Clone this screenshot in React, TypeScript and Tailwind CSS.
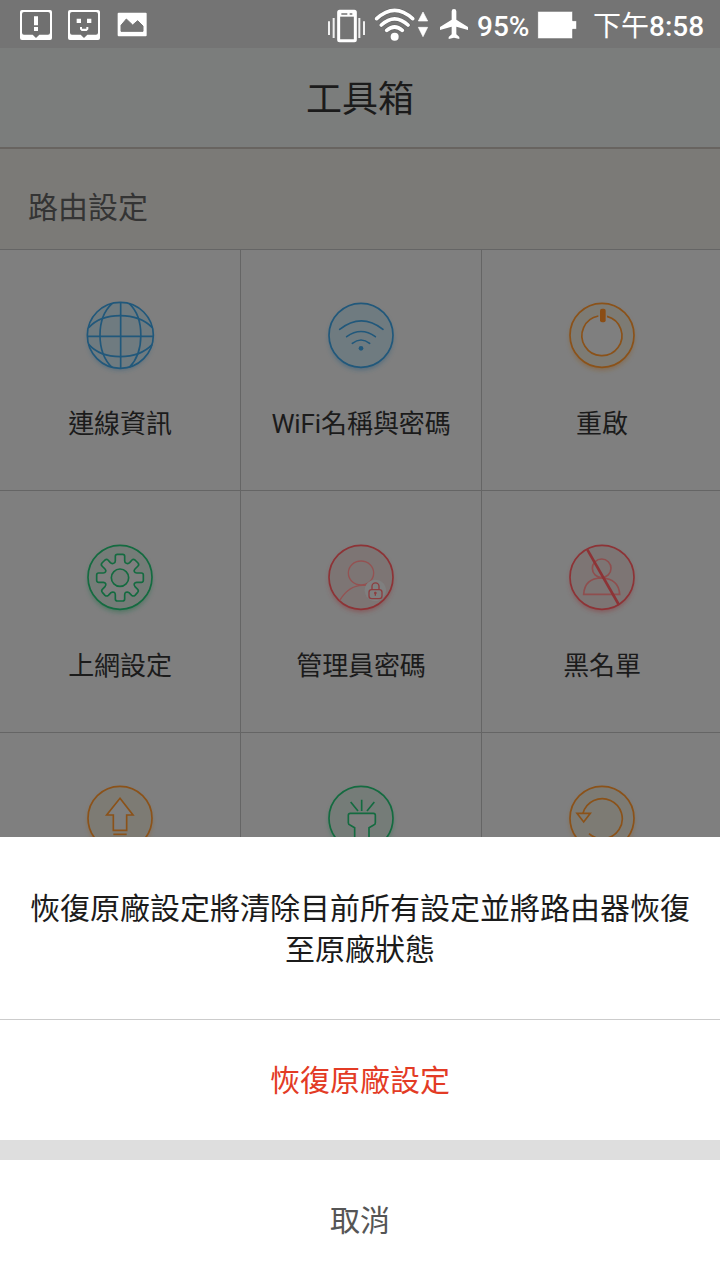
import type { ReactNode } from "react";

type Tone = "blue" | "orange" | "green" | "red";

const tones: Record<Tone, { stroke: string; fill: string }> = {
  blue: { stroke: "#21587b", fill: "#6f7b80" },
  orange: { stroke: "#8b5219", fill: "#7d7b74" },
  green: { stroke: "#146b40", fill: "#757c78" },
  red: { stroke: "#8d3336", fill: "#7d7574" },
};

function ToolIcon({ tone, children }: { tone: Tone; children: ReactNode }) {
  const { stroke, fill } = tones[tone];
  return (
    <svg width="100" height="100" viewBox="0 0 300 300" fill="none" stroke={stroke} strokeWidth="5" className="shrink-0">
      <defs>
        <filter id={`glow-${tone}`} x="-20%" y="-20%" width="140%" height="150%">
          <feGaussianBlur stdDeviation="8" />
        </filter>
      </defs>
      <circle cx="150" cy="160" r="95" fill={stroke} stroke="none" opacity="0.5" filter={`url(#glow-${tone})`} />
      <circle cx="150" cy="151" r="96" fill={fill} />
      {children}
    </svg>
  );
}

const GlobeIcon = () => (
  <ToolIcon tone="blue">
    <circle cx="151" cy="151" r="99" fill="#6f7b80" />
    <path d="M152 52v197M52 154h197" />
    <path d="M126 56C78 100 78 200 126 247M178 56C224 100 224 200 178 247" />
    <path d="M56 128C100 80 200 80 247 128M56 178C100 227 200 227 247 178" />
  </ToolIcon>
);

const WifiIcon = () => (
  <ToolIcon tone="blue">
    <path d="M86 133Q151 82 216 133M107 155Q150 124 193 155M124 175Q150 155 176 175" strokeLinecap="round" />
    <circle cx="150" cy="190" r="7" fill="#21587b" stroke="none" />
  </ToolIcon>
);

const PowerIcon = () => (
  <ToolIcon tone="orange">
    <circle cx="150" cy="152" r="60" fill="#7f7f7f" stroke="none" />
    <path d="M139 93A60 60 0 1 0 165 94" />
    <rect x="144" y="71" width="17" height="41" rx="6" fill="#8b4d14" stroke="none" />
  </ToolIcon>
);

const GearIcon = () => (
  <ToolIcon tone="green">
    <path
      fill="#7f7f7f"
      strokeLinejoin="round"
      d="M136 88Q136 82 142 82H158Q164 82 164 88V101Q164 107 169 109Q175 111 179 107L186 99Q190 95 195 99L204 108Q208 113 204 117L195 126Q191 130 193 134Q195 138 200 138H214Q220 138 220 144V160Q220 166 214 166H200Q195 166 193 170Q191 175 195 179L203 187Q207 191 203 196L195 205Q190 209 185 205L177 197Q173 194 168 196Q164 198 164 203V216Q164 222 158 222H142Q136 222 136 216V203Q136 198 132 196Q127 194 123 197L115 205Q110 209 105 205L97 196Q93 191 97 187L105 179Q109 175 107 170Q105 166 100 166H86Q80 166 80 160V144Q80 138 86 138H100Q105 138 107 134Q109 130 105 126L96 117Q92 113 96 108L105 99Q110 95 114 99L121 107Q125 111 131 109Q136 107 136 101Z"
    />
    <circle cx="150" cy="152" r="26" fill="#757c78" />
  </ToolIcon>
);

const AdminIcon = () => (
  <ToolIcon tone="red">
    <g stroke="#945252" strokeWidth="4">
      <ellipse cx="150" cy="138" rx="38" ry="36" />
      <path d="M86 220Q114 175 154 175H170" />
      <circle cx="193" cy="190" r="32" fill="#7f7f7f" stroke="none" />
      <rect x="174" y="188" width="39" height="27" rx="8" stroke="#8d3d3f" />
      <path d="M183 187v-9a10 10 0 0 1 21 0v9M193 194v12M189 198h8" stroke="#8d3d3f" />
    </g>
  </ToolIcon>
);

const BlacklistIcon = () => (
  <ToolIcon tone="red">
    <g stroke="#8f4e4e">
      <circle cx="149" cy="124" r="28" />
      <path d="M95 202Q98 153 149 153Q200 155 203 202Z" />
    </g>
    <path d="M106 68L201 234" strokeWidth="8" />
  </ToolIcon>
);

const UpgradeIcon = () => (
  <ToolIcon tone="orange">
    <path d="M150 91L189 141H170V187H130V141H110Z" fill="#7f7f7f" />
    <path d="M130 199h40" />
  </ToolIcon>
);

const TorchIcon = () => (
  <ToolIcon tone="green">
    <path d="M119 102L141 129M152 95V129M190 102L168 129" />
    <path
      d="M118 136H187Q193 136 193 142V164Q193 169 188 171L174 179V250H131V179L117 171Q112 169 112 164V142Q112 136 118 136Z"
      fill="#7f7f7f"
    />
  </ToolIcon>
);

const ResetIcon = () => (
  <ToolIcon tone="orange">
    <path d="M93 136A60 60 0 1 1 111 197" />
    <path d="M75 136H115L95 162Z" />
  </ToolIcon>
);

// the last row sits behind the sheet, only its icons peek out
const rows = [
  {
    className: "h-[241px] pt-[35px]",
    items: [
      { label: "連線資訊", icon: <GlobeIcon /> },
      { label: "WiFi名稱與密碼", icon: <WifiIcon /> },
      { label: "重啟", icon: <PowerIcon /> },
    ],
  },
  {
    className: "h-[242px] pt-9",
    items: [
      { label: "上網設定", icon: <GearIcon /> },
      { label: "管理員密碼", icon: <AdminIcon /> },
      { label: "黑名單", icon: <BlacklistIcon /> },
    ],
  },
  {
    className: "h-[241px] pt-[35px]",
    items: [
      { label: "", icon: <UpgradeIcon /> },
      { label: "", icon: <TorchIcon /> },
      { label: "", icon: <ResetIcon /> },
    ],
  },
];

function StatusBar() {
  return (
    <div className="flex h-12 shrink-0 items-center bg-[#747474] text-white">
      <svg width="160" height="48" viewBox="0 0 480 144" className="shrink-0">
        <rect x="60" y="30" width="96" height="90" rx="6" fill="#fff" />
        <path d="M72 36H144Q150 36 150 42V98Q150 104 144 104H118L108 114L98 104H72Q66 104 66 98V42Q66 36 72 36Z" fill="#707070" />
        <path d="M102 49H114V76H102ZM102 81H114V93H102Z" fill="#fff" />
        <rect x="204" y="30" width="96" height="90" rx="6" fill="#fff" />
        <path d="M216 36H288Q294 36 294 42V98Q294 104 288 104H262L252 114L242 104H216Q210 104 210 98V42Q210 36 216 36Z" fill="#707070" />
        <path d="M230 56H243V69H230ZM261 56H274V69H261ZM240 81H246V86H259V81H265V88L260 93H245L240 88Z" fill="#fff" />
        <rect x="353" y="38" width="87" height="71" rx="3" fill="#fff" />
        <path d="M363 94V76L379 57L398 75L413 62L429 78V94Z" fill="#747474" strokeLinejoin="round" stroke="#747474" strokeWidth="3" />
      </svg>
      <svg width="163" height="48" viewBox="0 0 489 144" className="ml-[150px] shrink-0">
        <rect x="86" y="34" width="50" height="88" rx="3" stroke="#fff" strokeWidth="9" fill="none" />
        <path d="M86 42H136" stroke="#fff" strokeWidth="16" />
        <path d="M94 42H112M119 42H127" stroke="#747474" strokeWidth="5" />
        <path d="M57 64V105M71 54V114M148 54V114M162 64V105" stroke="#f0f0f0" strokeWidth="6" />
        <g fill="none" strokeLinecap="round">
          <path d="M200 56Q254 6 308 56M214 75Q254 38 294 75M230 91Q254 71 277 91" stroke="#606060" strokeWidth="14" />
          <path d="M200 56Q254 6 308 56M214 75Q254 38 294 75M230 91Q254 71 277 91" stroke="#fff" strokeWidth="11" />
        </g>
        <circle cx="254" cy="110" r="12" fill="#fff" />
        <path d="M339 36L353 63H325ZM339 110L353 82H325Z" fill="#fff" stroke="#fff" strokeWidth="2" strokeLinejoin="round" />
        <path d="M432 27Q439 27 439 34V59L474 81V90L439 80V103L448 111V117L432 113L416 117V111L425 103V80L390 90V81L425 59V34Q425 27 432 27Z" fill="#fff" />
      </svg>
      <span className="ml-1 w-[53px] shrink-0 whitespace-nowrap pt-1.5 font-['Roboto'] text-[28px] leading-none font-medium">95%</span>
      <svg width="42" height="48" viewBox="0 0 126 144" className="ml-1.5 shrink-0">
        <path d="M5 34H110V62H122V88H110V116H5Z" fill="#fff" stroke="#606060" strokeWidth="2" />
      </svg>
      <span className="ml-[15px] whitespace-nowrap pt-1.5 font-['Roboto','Noto_Sans_CJK_TC',sans-serif] text-[28px] leading-none">
        下午<span className="font-medium">8:58</span>
      </span>
    </div>
  );
}

export default function App() {
  return (
    <div className="flex h-[1280px] w-[720px] flex-col overflow-hidden bg-[#7f7f7f] font-['Roboto','Noto_Sans_CJK_TC',sans-serif] text-[#1b1b1b]">
      <StatusBar />
      <header className="flex h-[101px] shrink-0 items-center justify-center border-b-2 border-[#686460] bg-[#7b7d7c] pt-1 text-4xl">
        工具箱
      </header>
      <div className="flex h-[101px] shrink-0 items-center border-b border-[#656565] bg-[#7b7a77] px-7 pt-4 text-[30px] text-[#343434]">
        路由設定
      </div>

      <main className="h-[587px] shrink-0 overflow-hidden">
        {rows.map((row, i) => (
          <div key={i} className="grid grid-cols-[241px_241px_241px]">
            {row.items.map(({ label, icon }, j) => (
              <div
                key={j}
                className={`flex flex-col items-center border-r border-b border-[#656565] ${row.className}`}
              >
                {icon}
                {label && (
                  <span className="mt-[19px] text-[26px] leading-10 tracking-[-0.1px] whitespace-nowrap">{label}</span>
                )}
              </div>
            ))}
          </div>
        ))}
      </main>

      <section className="flex flex-1 flex-col bg-white text-center text-[30px]">
        <p className="flex h-[183px] shrink-0 items-center justify-center border-b border-[#cccccc] px-7 pt-0.5 leading-[41px]">
          恢復原廠設定將清除目前所有設定並將路由器恢復至原廠狀態
        </p>
        <button className="h-[120px] shrink-0 text-[#e33b25]">恢復原廠設定</button>
        <div className="h-5 shrink-0 bg-[#dedede]" />
        <button className="flex-1 text-[#555555]">取消</button>
      </section>
    </div>
  );
}
